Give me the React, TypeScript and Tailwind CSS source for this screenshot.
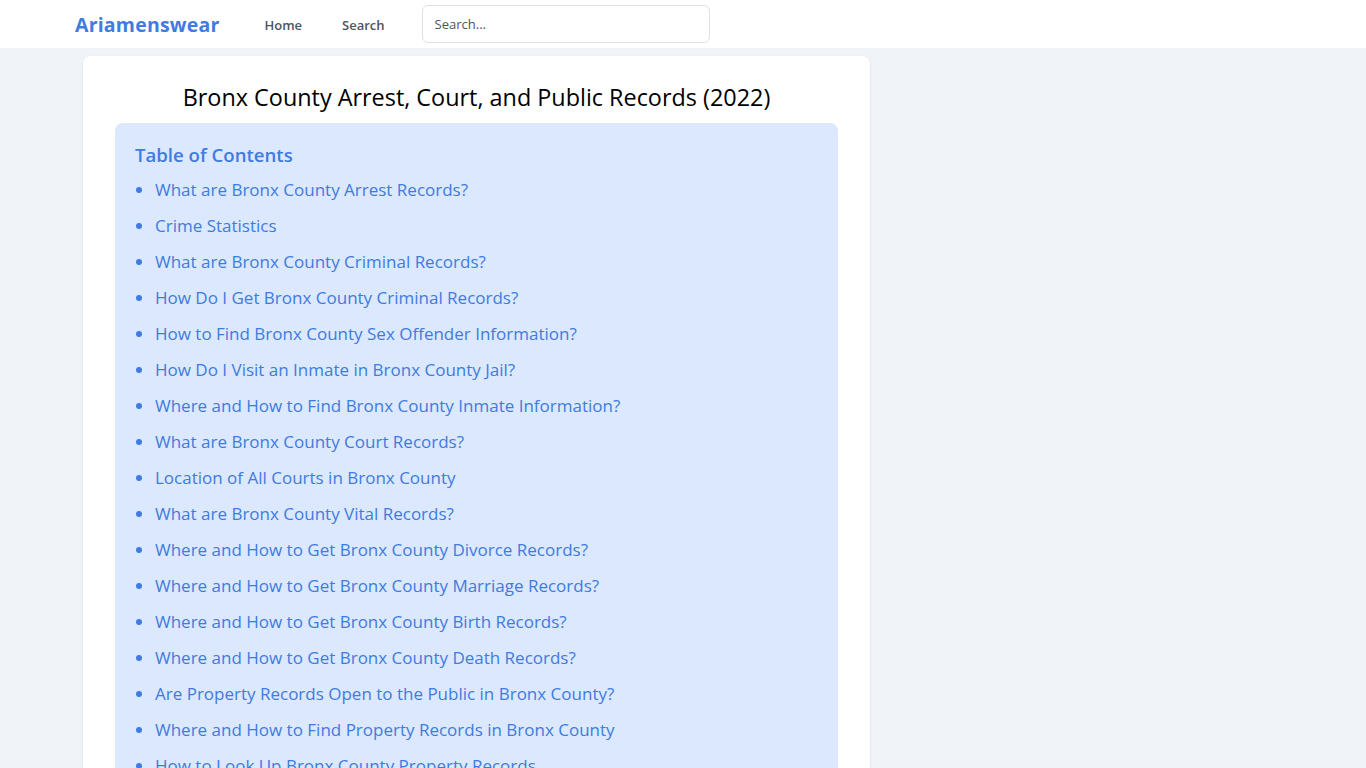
const contents = [
  'What are Bronx County Arrest Records?',
  'Crime Statistics',
  'What are Bronx County Criminal Records?',
  'How Do I Get Bronx County Criminal Records?',
  'How to Find Bronx County Sex Offender Information?',
  'How Do I Visit an Inmate in Bronx County Jail?',
  'Where and How to Find Bronx County Inmate Information?',
  'What are Bronx County Court Records?',
  'Location of All Courts in Bronx County',
  'What are Bronx County Vital Records?',
  'Where and How to Get Bronx County Divorce Records?',
  'Where and How to Get Bronx County Marriage Records?',
  'Where and How to Get Bronx County Birth Records?',
  'Where and How to Get Bronx County Death Records?',
  'Are Property Records Open to the Public in Bronx County?',
  'Where and How to Find Property Records in Bronx County',
  'How to Look Up Bronx County Property Records',
  'What are Bronx County Warrants?',
];

export default function App() {
  return (
    <div className="min-h-screen bg-[#f0f4f9] font-['Open_Sans',sans-serif]">
      <header className="h-12 bg-white">
        <div className="flex h-full items-center pl-[75px]">
          <a href="#" className="mt-[2px] text-[19.5px] font-bold tracking-[0.2px] text-[#3f7be0]">Ariamenswear</a>
          <nav className="ml-[45px] mt-[3px] flex gap-[40px] text-[13px] font-semibold text-[#4b5563]">
            <a href="#">Home</a>
            <a href="#">Search</a>
          </nav>
          <input
            className="ml-[37px] h-[38px] w-[288px] rounded-md border border-[#dde1e6] px-3 text-[13px] outline-none placeholder:text-[#4b5563]"
            placeholder="Search..."
          />
        </div>
      </header>

      <main className="pl-[83px] pt-2">
        <article className="w-[787px] rounded-lg bg-white px-8 pb-8 pt-6 shadow-sm">
          <h1 className="text-center text-[23.4px] font-medium text-black">
            Bronx County Arrest, Court, and Public Records (2022)
          </h1>
          <div className="mt-[8px] rounded-lg bg-[#dbe8fd] px-5 pb-5 pt-[18px]">
            <h2 className="text-[18.6px] font-semibold text-[#3f7be0]">Table of Contents</h2>
            <ul className="mt-[3px] list-disc pl-5 text-[17px] leading-[36px] text-[#3f7be0] marker:text-[#3f7be0]">
              {contents.map((item) => (
                <li key={item}>
                  <a href="#">{item}</a>
                </li>
              ))}
            </ul>
          </div>
        </article>
      </main>
    </div>
  );
}
